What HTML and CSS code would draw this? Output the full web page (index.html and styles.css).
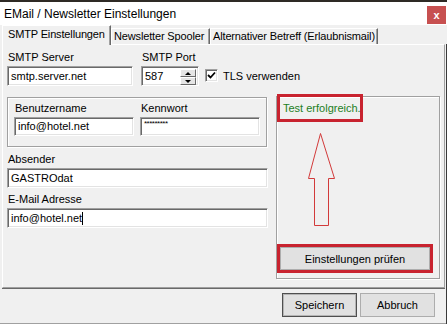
FILE: index.html
```html
<!DOCTYPE html>
<html lang="de">
<head>
    <meta charset="UTF-8">
    <title>EMail / Newsletter Einstellungen</title>
    <link rel="stylesheet" href="styles.css">
</head>
<body>
<div class="window">
    <div class="frame-top"></div>
    <div class="titlebar">
        <span class="title">EMail / Newsletter Einstellungen</span>
        <span class="close">x</span>
    </div>

    <div class="tabs">
        <div class="tab active">SMTP Einstellungen</div>
        <div class="tab tab-spooler">Newsletter Spooler</div>
        <div class="tab tab-betreff">Alternativer Betreff (Erlaubnismail)</div>
    </div>

    <div class="dialog-body">
        <div class="panel">
            <div class="left-col">
                <div class="server-row">
                    <div class="field field-server">
                        <label>SMTP Server</label>
                        <div class="input">smtp.server.net</div>
                    </div>
                    <div class="field field-port">
                        <label>SMTP Port</label>
                        <div class="input spin">
                            <span>587</span>
                            <div class="spin-btns">
                                <div class="spin-btn"><span class="tri-up"></span></div>
                                <div class="spin-btn"><span class="tri-down"></span></div>
                            </div>
                        </div>
                    </div>
                    <div class="check-row">
                        <div class="checkbox">
                            <svg width="9" height="9" viewBox="0 0 9 9"><path d="M1 4 L3.5 6.5 L8 1.5" fill="none" stroke="#000" stroke-width="1.8"/></svg>
                        </div>
                        <span>TLS verwenden</span>
                    </div>
                </div>

                <div class="group login-group">
                    <div class="field field-half">
                        <label>Benutzername</label>
                        <div class="input short">info@hotel.net</div>
                    </div>
                    <div class="field field-half">
                        <label>Kennwort</label>
                        <div class="input short"><span class="stars">*********</span></div>
                    </div>
                </div>

                <div class="field field-wide first-wide">
                    <label>Absender</label>
                    <div class="input">GASTROdat</div>
                </div>
                <div class="field field-wide">
                    <label>E-Mail Adresse</label>
                    <div class="input">info@hotel.net<span class="caret"></span></div>
                </div>
            </div>

            <div class="group test-group">
                <div class="marker result-box">Test erfolgreich.</div>
                <svg class="arrow" width="28" height="94" viewBox="0 0 28 94">
                    <polygon points="12.5,0.5 0.5,45.5 6.5,45.5 6.5,92.5 20.5,92.5 20.5,45.5 26.5,45.5" fill="none" stroke="#d23a3a" stroke-width="1"/>
                </svg>
                <div class="marker test-box">
                    <div class="btn btn-fill">Einstellungen prüfen</div>
                </div>
            </div>
        </div>

        <div class="footer">
            <div class="btn btn-default">Speichern</div>
            <div class="btn">Abbruch</div>
        </div>
    </div>
</div>
</body>
</html>
```

FILE: styles.css
```css
body {
    margin: 0;
    background-color: #f0f0f0;
    font-family: "Liberation Sans", Arial, sans-serif;
    font-size: 11px;
    color: #000;
}

.window {
    width: 447px;
    height: 324px;
    overflow: hidden;
    background-color: #f0f0f0;
}

.frame-top {
    height: 2px;
    background-color: #2e2a25;
}

.titlebar {
    height: 23px;
    background-color: #fff;
    display: flex;
    align-items: center;
    justify-content: space-between;
    padding-left: 4px;
    padding-right: 1px;
}

.title {
    font-size: 12px;
}

.close {
    width: 19px;
    height: 18px;
    background-color: #c75050;
    color: #fff;
    font-weight: bold;
    font-size: 11px;
    display: flex;
    align-items: center;
    justify-content: center;
    margin-top: 2px;
}

.tabs {
    height: 19px;
    display: flex;
    align-items: flex-end;
    padding-left: 2px;
    letter-spacing: -0.15px;
}

.tab {
    height: 16px;
    box-sizing: border-box;
    border-top: 1px solid #fff;
    border-left: 1px solid #fff;
    border-right: 1px solid #696969;
    box-shadow: inset -1px 0 0 #a0a0a0;
    padding-left: 2px;
    line-height: 14px;
    white-space: nowrap;
    overflow: hidden;
}

.tab.active {
    width: 109px;
    height: 20px;
    margin-bottom: -1px;
    padding-left: 5px;
    line-height: 17px;
    background-color: #f0f0f0;
    position: relative;
    z-index: 1;
}

.tab-spooler {
    width: 99px;
}

.tab-betreff {
    width: 168px;
}

.dialog-body {
    border-right: 1px solid #3a3a3a;
}

.panel {
    height: 244px;
    box-sizing: border-box;
    margin-left: 2px;
    margin-right: 1px;
    border-top: 1px solid #fff;
    border-left: 1px solid #fff;
    border-right: 1px solid #a0a0a0;
    border-bottom: 1px solid #a0a0a0;
    box-shadow: 0 1px 0 #696969;
    padding: 6px 0 0 4px;
    display: flex;
}

.left-col {
    width: 261px;
    flex-shrink: 0;
    display: flex;
    flex-direction: column;
}

.field {
    flex-shrink: 0;
}

.field label {
    display: block;
    height: 15px;
    line-height: 13px;
    padding-left: 1px;
    white-space: nowrap;
}

.input {
    height: 20px;
    box-sizing: border-box;
    background-color: #fff;
    border-top: 1px solid #a0a0a0;
    border-left: 1px solid #a0a0a0;
    border-right: 1px solid #fff;
    border-bottom: 1px solid #fff;
    box-shadow: inset 1px 1px 0 #696969, inset -1px -1px 0 #e3e3e3;
    padding-left: 3px;
    line-height: 18px;
    white-space: nowrap;
    overflow: hidden;
}

.input.short {
    height: 19px;
    line-height: 17px;
}

.server-row {
    display: flex;
    align-items: flex-end;
}

.field-server {
    width: 126px;
}

.field-port {
    width: 58px;
    margin-left: 8px;
}

.spin {
    display: flex;
    justify-content: space-between;
    padding-right: 2px;
}

.spin-btns {
    width: 16px;
    display: flex;
    flex-direction: column;
    padding-top: 2px;
}

.spin-btn {
    height: 8px;
    background-color: #e5e5e5;
    border: 1px solid #fff;
    border-right-color: #696969;
    border-bottom-color: #696969;
    display: flex;
    align-items: center;
    justify-content: center;
}

.tri-up {
    border-left: 3px solid transparent;
    border-right: 3px solid transparent;
    border-bottom: 3px solid #000;
}

.tri-down {
    border-left: 3px solid transparent;
    border-right: 3px solid transparent;
    border-top: 3px solid #000;
}

.check-row {
    display: flex;
    align-items: center;
    margin-left: 6px;
    margin-bottom: 4px;
    white-space: nowrap;
}

.checkbox {
    width: 13px;
    height: 13px;
    flex-shrink: 0;
    box-sizing: border-box;
    background-color: #fff;
    border-top: 1px solid #a0a0a0;
    border-left: 1px solid #a0a0a0;
    border-right: 1px solid #fff;
    border-bottom: 1px solid #fff;
    box-shadow: inset 1px 1px 0 #696969, inset -1px -1px 0 #e3e3e3;
    display: flex;
    align-items: center;
    justify-content: center;
    margin-right: 5px;
}

.group {
    border: 1px solid #a0a0a0;
    box-shadow: inset 1px 1px 0 #fff, 1px 1px 0 #fff;
}

.login-group {
    width: 260px;
    box-sizing: border-box;
    margin-top: 11px;
    padding: 4px 0 10px 6px;
    display: flex;
    gap: 6px;
}

.field-half {
    width: 120px;
}

.stars {
    font-size: 8px;
    line-height: 8px;
    vertical-align: top;
    letter-spacing: -0.5px;
    position: relative;
    top: 2px;
}

.field-wide {
    margin-top: 5px;
}

.first-wide {
    margin-top: 6px;
}

.caret {
    display: inline-block;
    width: 1px;
    height: 13px;
    background-color: #000;
    vertical-align: -3px;
}

.test-group {
    width: 164px;
    box-sizing: border-box;
    margin: 45px 0 8px 8px;
    display: flex;
    flex-direction: column;
}

.marker {
    border: 3px solid #c8232f;
    box-sizing: border-box;
}

.result-box {
    width: 86px;
    height: 28px;
    margin: -3px 0 0 0;
    padding-left: 3px;
    line-height: 22px;
    color: #1d7f1d;
    white-space: nowrap;
}

.arrow {
    display: block;
    margin: 11px 0 0 31px;
}

.test-box {
    width: 156px;
    height: 29px;
    margin-top: auto;
    margin-bottom: 5px;
}

.btn {
    height: 24px;
    box-sizing: border-box;
    background-color: #e1e1e1;
    border: 1px solid #adadad;
    display: flex;
    align-items: center;
    justify-content: center;
}

.btn-fill {
    height: 100%;
}

.footer {
    height: 36px;
    box-sizing: border-box;
    border-bottom: 1px solid #a0a0a0;
    display: flex;
    justify-content: flex-end;
    gap: 3px;
    padding: 5px 11px 0 0;
}

.footer .btn {
    width: 75px;
}

.btn-default {
    border-color: #4f4f4f;
    box-shadow: inset 0 0 0 1px #b5b5b5;
}
```
